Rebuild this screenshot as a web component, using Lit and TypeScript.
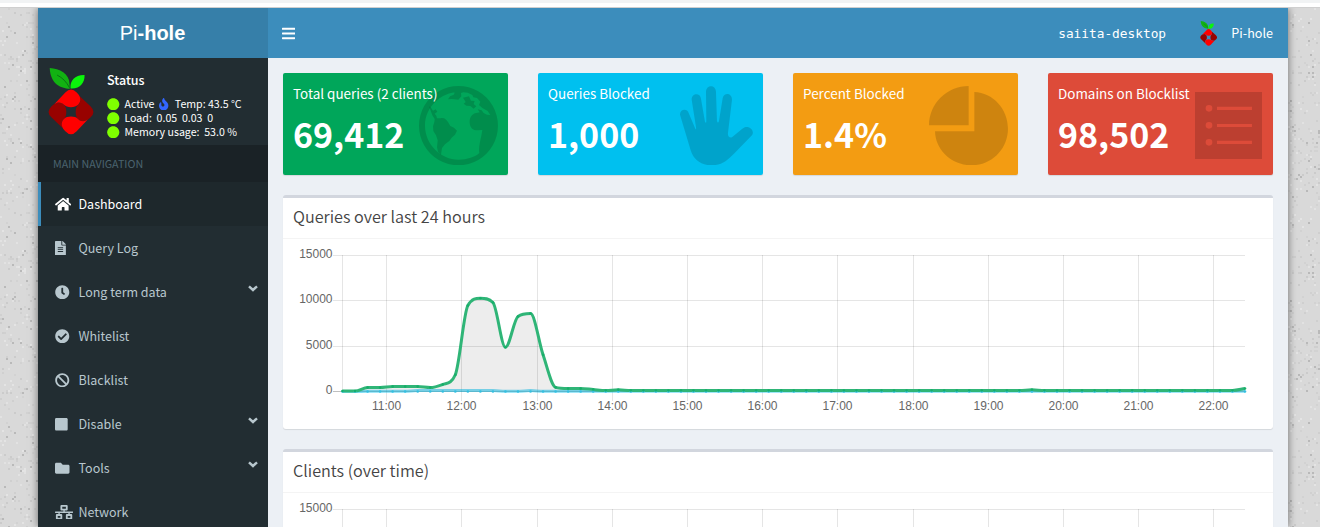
import { LitElement, html, svg, css } from "lit";
import { customElement, property } from "lit/decorators.js";
import { classMap } from "lit/directives/class-map.js";

interface Glyph { w: number; d: string; }

const GLYPHS: Record<string, Glyph> = {
  home: { w: 576, d: "M280.37 148.26L96 300.11V464a16 16 0 0 0 16 16l112.06-.29a16 16 0 0 0 15.92-16V368a16 16 0 0 1 16-16h64a16 16 0 0 1 16 16v95.64a16 16 0 0 0 16 16.05L464 480a16 16 0 0 0 16-16V300L295.67 148.26a12.19 12.19 0 0 0-15.3 0zM571.6 251.47L488 182.56V44.05a12 12 0 0 0-12-12h-56a12 12 0 0 0-12 12v72.61L318.47 43a48 48 0 0 0-61 0L4.34 251.47a12 12 0 0 0-1.6 16.9l25.5 31A12 12 0 0 0 45.15 301l235.22-193.74a12.19 12.19 0 0 1 15.3 0L530.9 301a12 12 0 0 0 16.9-1.6l25.5-31a12 12 0 0 0-1.7-16.93z" },
  file: { w: 384, d: "M224 136V0H24C10.7 0 0 10.7 0 24v464c0 13.3 10.7 24 24 24h336c13.3 0 24-10.7 24-24V160H248c-13.2 0-24-10.8-24-24zm64 236c0 6.6-5.4 12-12 12H108c-6.6 0-12-5.4-12-12v-8c0-6.6 5.4-12 12-12h168c6.6 0 12 5.4 12 12v8zm0-64c0 6.6-5.4 12-12 12H108c-6.6 0-12-5.4-12-12v-8c0-6.6 5.4-12 12-12h168c6.6 0 12 5.4 12 12v8zm0-72v8c0 6.6-5.4 12-12 12H108c-6.6 0-12-5.4-12-12v-8c0-6.6 5.4-12 12-12h168c6.6 0 12 5.4 12 12zm96-114.1v6.1H256V0h6.1c6.4 0 12.5 2.5 17 7l97.9 98c4.5 4.5 7 10.6 7 16.9z" },
  clock: { w: 512, d: "M256,8C119,8,8,119,8,256S119,504,256,504,504,393,504,256,393,8,256,8Zm92.49,313h0l-20,25a16,16,0,0,1-22.49,2.5h0l-67-49.72a40,40,0,0,1-15-31.23V112a16,16,0,0,1,16-16h32a16,16,0,0,1,16,16V256l58,42.5A16,16,0,0,1,348.49,321Z" },
  check: { w: 512, d: "M504 256c0 136.967-111.033 248-248 248S8 392.967 8 256 119.033 8 256 8s248 111.033 248 248zM227.314 387.314l184-184c6.248-6.248 6.248-16.379 0-22.627l-22.627-22.627c-6.248-6.249-16.379-6.249-22.628 0L216 308.118l-70.059-70.059c-6.248-6.248-16.379-6.248-22.628 0l-22.627 22.627c-6.248 6.248-6.248 16.379 0 22.627l104 104c6.249 6.249 16.379 6.249 22.628.001z" },
  ban: { w: 512, d: "M256 8C119.034 8 8 119.033 8 256s111.034 248 248 248 248-111.034 248-248S392.967 8 256 8zm130.108 117.892c65.448 65.448 70 165.481 20.677 235.637L150.47 105.216c70.204-49.356 170.226-44.735 235.638 20.676zM125.892 386.108c-65.448-65.448-70-165.481-20.677-235.637L361.53 406.784c-70.203 49.356-170.226 44.736-235.638-20.676z" },
  stop: { w: 448, d: "M400 32H48C21.5 32 0 53.5 0 80v352c0 26.5 21.5 48 48 48h352c26.5 0 48-21.5 48-48V80c0-26.5-21.5-48-48-48z" },
  folder: { w: 512, d: "M464 128H272l-64-64H48C21.49 64 0 85.49 0 112v288c0 26.51 21.49 48 48 48h416c26.51 0 48-21.49 48-48V176c0-26.51-21.49-48-48-48z" },
  network: { w: 640, d: "M640 264v-16c0-8.84-7.16-16-16-16H344v-40h72c17.67 0 32-14.33 32-32V32c0-17.67-14.33-32-32-32H224c-17.67 0-32 14.33-32 32v128c0 17.67 14.33 32 32 32h72v40H16c-8.84 0-16 7.16-16 16v16c0 8.84 7.16 16 16 16h104v40H64c-17.67 0-32 14.33-32 32v128c0 17.67 14.33 32 32 32h160c17.67 0 32-14.33 32-32V352c0-17.67-14.33-32-32-32h-56v-40h304v40h-56c-17.67 0-32 14.33-32 32v128c0 17.67 14.33 32 32 32h160c17.67 0 32-14.33 32-32V352c0-17.67-14.33-32-32-32h-56v-40h104c8.84 0 16-7.16 16-16zM256 128V64h128v64H256zm-64 320H96v-64h96v64zm352 0h-96v-64h96v64z" },
  bars: { w: 448, d: "M16 132h416c8.837 0 16-7.163 16-16V76c0-8.837-7.163-16-16-16H16C7.163 60 0 67.163 0 76v40c0 8.837 7.163 16 16 16zm0 160h416c8.837 0 16-7.163 16-16v-40c0-8.837-7.163-16-16-16H16c-8.837 0-16 7.163-16 16v40c0 8.837 7.163 16 16 16zm0 160h416c8.837 0 16-7.163 16-16v-40c0-8.837-7.163-16-16-16H16c-8.837 0-16 7.163-16 16v40c0 8.837 7.163 16 16 16z" },
  fire: { w: 384, d: "M216 23.86c0-23.8-30.65-32.77-44.15-13.04C48 191.85 224 200 224 288c0 35.63-29.11 64.46-64.85 63.99-35.17-.45-63.15-29.77-63.15-64.94v-85.51c0-21.7-26.47-32.23-41.43-16.5C27.8 213.16 0 261.33 0 320c0 105.87 86.13 192 192 192s192-86.13 192-192c0-170.29-168-193-168-296.14z" },
  circle: { w: 512, d: "M256 8C119 8 8 119 8 256s111 248 248 248 248-111 248-248S393 8 256 8z" },
};

const glyph = (name: string, size: number) => {
  const g = GLYPHS[name];
  return html`<svg class="glyph" width=${(g.w / 512) * size} height=${size} viewBox="0 0 ${g.w} 512" fill="currentColor"><path d=${g.d}></path></svg>`;
};

/* One petal around the origin, turned for each of the four sides of the fruit. */
const PETAL = "M-50 -23L-17 -58Q0 -76 17 -58L23 -51C31 -38 28 -28 21 -21C16 -16 9 -14 0 -14C-9 -14 -16 -16 -21 -21C-28 -28 -38 -31 -50 -23Z";

const piholeLogo = (width: number, height: number) => html`
  <svg class="glyph" width=${width} height=${height} viewBox="143 205 137 200">
    <path fill="#12b212" d="M148 205C177 207 207 222 207 252L208 267C180 266 150 252 148 205Z"></path>
    <path fill="none" stroke="#086b13" stroke-width="2.500" d="M170 226Q194 238 207 264"></path>
    <path fill="#0bf50b" d="M252 226C253 250 238 268 210 266C208 242 224 225 252 226Z"></path>
    <g transform="translate(211.500 336)">
      <path fill="#980200" transform="rotate(90)" d=${PETAL}></path>
      <path fill="#980200" transform="rotate(270)" d=${PETAL}></path>
      <path fill="#ff0000" d=${PETAL}></path>
      <path fill="#ff0000" transform="rotate(180)" d=${PETAL}></path>
    </g>
  </svg>`;

const earthIcon = html`
  <svg class="art" width="79" height="79.3" viewBox="416 77 237 238" fill="currentColor">
    <path fill-rule="evenodd" d="M534.500 77A118.500 119 0 1 1 534.400 77ZM534.500 95C483 95 434 140 434 196C434 252 482 298 534.500 298C560 298 585 290 597 278C594 262 600 240 603 226L606 209L592 210C577 210 569 202 568 187C567 170 576 158 592 157L598 156L592 147L604 150L610 158L620 163L630 164L622 152L606 143L596 134L600 124L590 113L579 111L576 104L562 97L549 96L542 98L543 108L534 118L522 117L514 116L503 117L509 108L520 103L524 96Z"></path>
    <path d="M446 138L452 142L458 151L466 147L471 154L463 160L468 166L470 174L480 174C492 171 497 177 503 185L510 197L521 202L530 211L524 223L514 232L507 242L494 252L485 263L482 283L473 275L470 261L472 240L467 225L459 212L458 198L462 185L463 176L456 165Z"></path>
    <path d="M548 112L566 108L572 121L583 122L580 131L588 138L580 145L570 137L558 136L550 130L556 125Z"></path>
  </svg>`;

const handIcon = html`
  <svg class="art" width="73.300" height="79.300" viewBox="450 77 220 238" fill="currentColor">
    <path d="M450 163C449 146 472 143 476 158L496 205Q499 210 498 201L485 118C484 98 511 95 513 115L525 184Q529 191 529 182L528 94C529 72 557 72 558 94L561 182Q564 191 567 182L578 114C582 95 607 98 606 119L594 218Q593 233 606 231L636 206C652 190 677 208 666 225L612 280C592 300 575 315 544 315C512 315 490 297 482 270Z"></path>
  </svg>`;

const pieIcon = html`
  <svg class="art" width="79" height="79.300" viewBox="446 77 237 238" fill="currentColor">
    <path d="M565 77V195H446C446 130 500 77 565 77ZM582 95C638 97 683 146 683 205C683 266 634 315 573 315C515 315 465 270 464 213H582Z"></path>
  </svg>`;

const listIcon = html`
  <svg class="art" width="67.300" height="67" viewBox="495 276 202 201" fill="currentColor">
    <path fill-rule="evenodd" d="M495 276H697V477H495ZM527 325a10 10 0 1 0 20 0a10 10 0 1 0-20 0ZM527 376a10 10 0 1 0 20 0a10 10 0 1 0-20 0ZM527 427a10 10 0 1 0 20 0a10 10 0 1 0-20 0ZM561 320V330H666V320ZM561 372V381H666V372ZM561 422V432H666V422Z"></path>
  </svg>`;

/* Speckled paper texture behind the boxed layout. */
const speckles = (() => {
  let seed = 20;
  const next = () => {
    seed = (seed * 1664525 + 1013904223) % 4294967296;
    return seed / 4294967296;
  };
  const tones = ["#cbcbcb", "#d2d2d2", "#e4e4e4", "#cfcfcf", "#b9b9b9", "#d0d0d0", "#e2e2e2"];
  return Array.from({ length: 750 }, () => ({
    x: Math.floor(next() * 75) * 2,
    y: Math.floor(next() * 100) * 2,
    fill: tones[Math.floor(next() * tones.length)],
  }));
})();

type Point = [number, number];

/* Monotone cubic path through the points. */
const smooth = (p: Point[]): string => {
  const slope = p.slice(1).map((q, i) => (q[1] - p[i][1]) / (q[0] - p[i][0]));
  const m = p.map((_, i) => {
    if (i === 0) return slope[0];
    if (i === p.length - 1) return slope[i - 1];
    return slope[i - 1] * slope[i] <= 0 ? 0 : (slope[i - 1] + slope[i]) / 2;
  });
  slope.forEach((s, i) => {
    if (s === 0) {
      m[i] = m[i + 1] = 0;
      return;
    }
    const a = m[i] / s;
    const b = m[i + 1] / s;
    const r = a * a + b * b;
    if (r > 9) {
      const t = 3 / Math.sqrt(r);
      m[i] = t * a * s;
      m[i + 1] = t * b * s;
    }
  });
  let d = `M${p[0][0]} ${p[0][1]}`;
  for (let i = 0; i < p.length - 1; i++) {
    const h = (p[i + 1][0] - p[i][0]) / 3;
    d += `C${p[i][0] + h} ${p[i][1] + m[i] * h} ${p[i + 1][0] - h} ${p[i + 1][1] - m[i + 1] * h} ${p[i + 1][0]} ${p[i + 1][1]}`;
  }
  return d;
};

const TOTAL = [50, 50, 430, 430, 540, 540, 540, 430, 780, 1850, 9480, 10290, 9820, 4880, 8280, 8600, 4050, 460, 330, 330, 220, 110, 190];
while (TOTAL.length < 72) TOTAL.push(TOTAL.length === 55 ? 190 : 110);
TOTAL.push(330);
const BLOCKED = TOTAL.map((_, i) => (i < 2 ? 0 : i > 5 && i < 13 ? 110 : i === 15 ? 100 : 20));

@customElement("time-chart")
export class TimeChart extends LitElement {
  /* Shows just the head of the plot: its top line and the first scale label. */
  @property({ type: Boolean }) head = false;

  static styles = css`
    :host { display: block; }
    .plot { display: block; margin-top: -4px; }
    .tick { font: 12px "Liberation Sans", Arial, sans-serif; fill: #666; }
  `;

  render() {
    const left = 49.5, bottom = 142.5, step = 12.535;
    const point = (v: number, i: number): Point => [left + i * step, bottom - (v / 15000) * 136];
    const total = smooth(TOTAL.map(point));
    const blocked = smooth(BLOCKED.map(point));
    const right = left + 72 * step;
    const height = this.head ? 28 : 174;
    return html`
      <svg class="plot" width="970" height=${height} viewBox="0 -4 970 ${height}">
        ${(this.head ? [15000] : [15000, 10000, 5000, 0]).map((v, i) => {
          const y = [6.5, 51.5, 97.5, 142.5][i];
          return svg`
            <line x1="40" x2=${right} y1=${y} y2=${y} stroke=${v ? "#e5e5e5" : "#bfbfbf"}></line>
            <text class="tick" x="39.500" y=${y + 2.4} text-anchor="end">${v}</text>`;
        })}
        <line x1="49.500" x2="49.500" y1="6" y2="142" stroke="rgba(0,0,0,.1)"></line>
        ${Array.from({ length: 12 }, (_, i) => {
          const x = Math.floor(93.6 + i * 75.21) + 0.5;
          return svg`
            <line x1=${x} x2=${x} y1="6" y2="152" stroke="rgba(0,0,0,.1)"></line>
            ${this.head ? "" : svg`<text class="tick" x=${x} y="161" text-anchor="middle">${11 + i}:00</text>`}`;
        })}
        ${this.head ? "" : svg`
          <path d="${blocked}" fill="none" stroke="rgba(0,192,239,.5)" stroke-width="3"></path>
          <path d="${total}V142.5H${left}Z" fill="rgba(0,0,0,.07)"></path>
          <path d=${total} fill="none" stroke="#2fb577" stroke-width="3" stroke-linejoin="round"></path>
          ${TOTAL.map((v, i) => {
            const [x, y] = point(v, i);
            return svg`
              <circle cx=${x} cy=${bottom} r="1.300" fill="#35bfe0"></circle>
              <circle cx=${x} cy=${y} r="1.300" fill="#16ae69"></circle>`;
          })}`}
      </svg>`;
  }
}

@customElement("app-root")
export class AppRoot extends LitElement {
  static styles = css`
    :host { display: block; height: 527px; overflow: hidden; font: 12.5px/20px "Noto Sans CJK SC", "Noto Sans", sans-serif; color: #333; }
    * { box-sizing: border-box; }
    .page { display: grid; grid-template: 3px 4px 1px 519px / 1fr; height: 527px; overflow: hidden; }
    .strip { background: #f1f3f4; }
    .gap { background: #fff; }
    .edge { background: #cfcfcf; }
    .desk { display: grid; grid-template-columns: 38px 1250px 32px; background: #d9d9d9; overflow: hidden; }
    .texture { grid-area: 1 / 1 / 2 / 4; display: block; width: 1320px; height: 519px; }
    .wrapper { grid-area: 1 / 2; display: grid; grid-template: 50px 469px / 230px 1020px; box-shadow: 0 0 8px rgba(0,0,0,.5); z-index: 1; background: #ecf0f5; }
    .glyph, .art { display: block; flex: none; }
    .logo { background: #367fa9; color: #fff; font: 20px/50px "Liberation Sans", Arial, sans-serif; text-align: center; padding-right: 1px; }
    .navbar { background: #3c8dbc; color: #fff; display: flex; align-items: center; padding: 0 15px 0 14px; }
    .host { margin-left: auto; font: 12.8px/20px "DejaVu Sans Mono", monospace; padding-top: 1px; }
    .user { display: flex; align-items: center; gap: 14px; margin-left: 34px; font-size: 12.6px; }
    .sidebar { background: #222d32; color: #b8c7ce; overflow: hidden; }
    .panel { display: grid; grid-template-columns: 46px 1fr; column-gap: 13px; height: 87px; padding: 10px; color: #fff; }
    .state { font-size: 12.5px; font-weight: 500; line-height: 20px; padding-top: 2px; }
    .info { display: flex; align-items: center; height: 14px; font-size: 10.6px; font-weight: 400; white-space: pre; }
    .rows { padding-top: 7px; }
    .dot { color: #7fff00; margin-right: 5px; }
    .flame { color: #3366ff; margin: 0 6px 0 5px; }
    .section { background: #1a2226; color: #4b646f; font-size: 10.7px; line-height: 17px; height: 37px; padding: 10px 15px; }
    .item { display: flex; align-items: center; height: 44px; border-left: 3px solid transparent; padding: 0 10px 0 14px; }
    .item.active { background: #1e282c; border-left-color: #3c8dbc; color: #fff; }
    .mark { width: 23.500px; flex: none; }
    .chevron { margin: -7px 0 0 auto; }
    .content { padding: 15px; overflow: hidden; }
    .cards { display: grid; grid-template-columns: repeat(4, 225px); column-gap: 30px; margin-bottom: 20px; }
    .card { display: grid; grid-template-columns: 1fr; height: 102px; border-radius: 2px; padding: 10px; color: #fff; box-shadow: 0 1px 1px rgba(0,0,0,.1); }
    .green { background: #00a65a; }
    .aqua { background: #00c0ef; }
    .orange { background: #f39c12; }
    .red { background: #dd4b39; }
    .words { grid-area: 1 / 1; z-index: 1; white-space: nowrap; }
    .caption { display: block; font-size: 13.45px; line-height: 20px; }
    .figure { display: block; font-size: 34px; font-weight: 700; line-height: 42px; padding-top: 10px; }
    .deco { grid-area: 1 / 1; justify-self: end; padding-top: 3px; color: rgba(0,0,0,.15); }
    .low { padding: 9px 0.700px 0 0; }
    .box { background: #fff; border-top: 3px solid #d2d6de; border-radius: 3px; box-shadow: 0 1px 1px rgba(0,0,0,.1); margin-bottom: 20px; height: 234px; }
    .title { height: 41px; border-bottom: 1px solid #f4f4f4; padding: 8px 10px; font-size: 16.2px; font-weight: 350; line-height: 20px; color: #444; }
    .body { padding: 10px; }
  `;

  private item(icon: string, label: string, menu = false, active = false) {
    return html`
      <div class=${classMap({ item: true, active })}>
        <span class="mark">${glyph(icon, 14.5)}</span>
        <span>${label}</span>
        ${menu ? html`<svg class="glyph chevron" width="10" height="7" viewBox="0 0 10 7" fill="none" stroke="currentColor" stroke-width="2.400"><path d="M1 1.300L5 5L9 1.300"></path></svg>` : ""}
      </div>`;
  }

  private card(tone: string, caption: string, figure: string, art: unknown, low = false) {
    return html`
      <div class="card ${tone}">
        <div class="words"><span class="caption">${caption}</span><span class="figure">${figure}</span></div>
        <div class=${classMap({ deco: true, low })}>${art}</div>
      </div>`;
  }

  render() {
    return html`
      <div class="page">
        <div class="strip"></div>
        <div class="gap"></div>
        <div class="edge"></div>
        <div class="desk">
          <svg class="texture" width="1320" height="519">
            <defs>
              <pattern id="grain" width="150" height="200" patternUnits="userSpaceOnUse">
                ${speckles.map((s) => svg`<rect x=${s.x} y=${s.y} width="2" height="2" fill=${s.fill}></rect>`)}
              </pattern>
            </defs>
            <rect width="1320" height="519" fill="url(#grain)"></rect>
          </svg>
          <div class="wrapper">
            <div class="logo">Pi<b>-hole</b></div>
            <div class="navbar">
              ${glyph("bars", 15)}
              <span class="host">saiita-desktop</span>
              <span class="user">${piholeLogo(17.3, 25)}<span>Pi-hole</span></span>
            </div>
            <div class="sidebar">
              <div class="panel">
                ${piholeLogo(46, 67)}
                <div>
                  <div class="state">Status</div>
                  <div class="rows">
                    <div class="info"><span class="dot">${glyph("circle", 12.5)}</span>Active<span class="flame">${glyph("fire", 12.5)}</span>Temp: 43.5 °C</div>
                    <div class="info"><span class="dot">${glyph("circle", 12.5)}</span>Load:  0.05  0.03  0</div>
                    <div class="info"><span class="dot">${glyph("circle", 12.5)}</span>Memory usage:  53.0 %</div>
                  </div>
                </div>
              </div>
              <div class="section">MAIN NAVIGATION</div>
              ${this.item("home", "Dashboard", false, true)}
              ${this.item("file", "Query Log")}
              ${this.item("clock", "Long term data", true)}
              ${this.item("check", "Whitelist")}
              ${this.item("ban", "Blacklist")}
              ${this.item("stop", "Disable", true)}
              ${this.item("folder", "Tools", true)}
              ${this.item("network", "Network")}
            </div>
            <div class="content">
              <div class="cards">
                ${this.card("green", "Total queries (2 clients)", "69,412", earthIcon)}
                ${this.card("aqua", "Queries Blocked", "1,000", handIcon)}
                ${this.card("orange", "Percent Blocked", "1.4%", pieIcon)}
                ${this.card("red", "Domains on Blocklist", "98,502", listIcon, true)}
              </div>
              <div class="box"><div class="title">Queries over last 24 hours</div><div class="body"><time-chart></time-chart></div></div>
              <div class="box"><div class="title">Clients (over time)</div><div class="body"><time-chart head></time-chart></div></div>
            </div>
          </div>
        </div>
      </div>`;
  }
}
